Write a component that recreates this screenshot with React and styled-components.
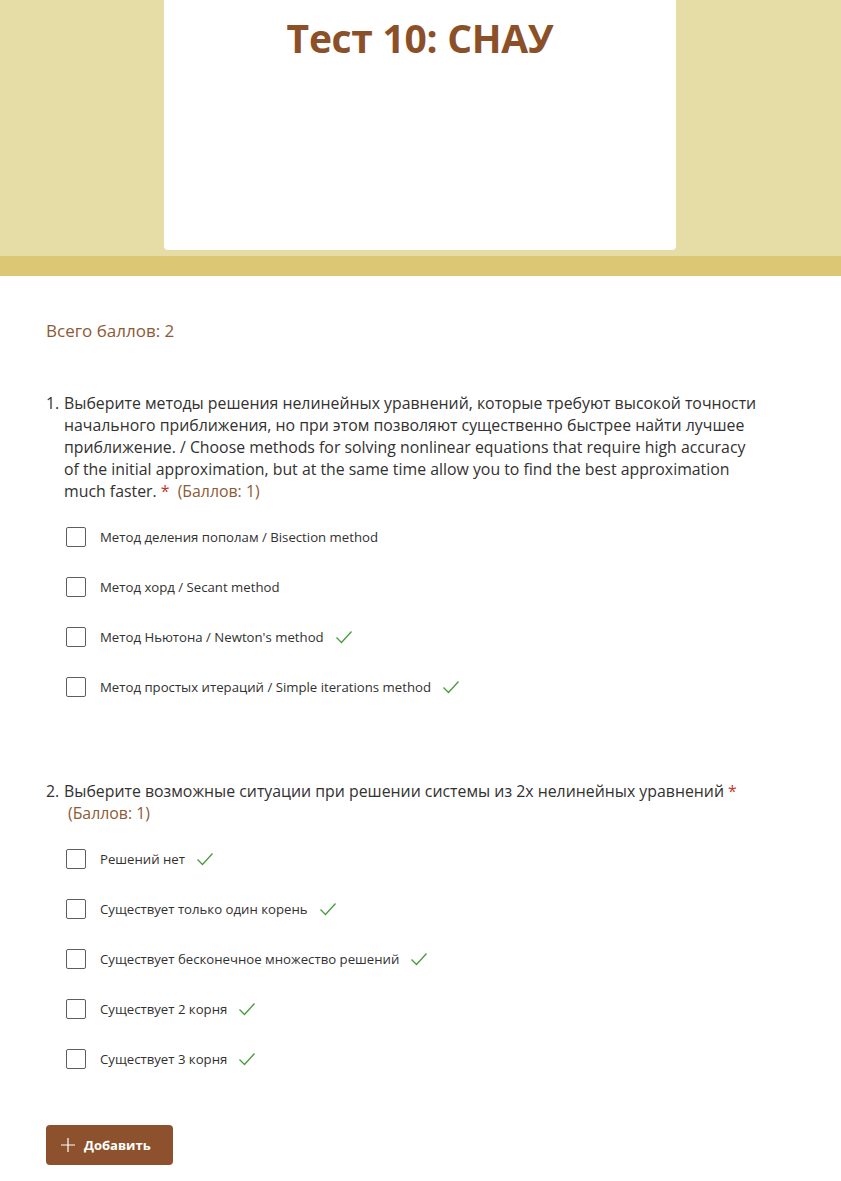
import React from 'react';
import styled, { createGlobalStyle } from 'styled-components';

const GlobalStyle = createGlobalStyle`
  html, body {
    margin: 0;
    padding: 0;
    background: #ffffff;
  }
  body {
    font-family: "Open Sans", "Noto Sans", "Liberation Sans", sans-serif;
    color: #333333;
  }
`;

const Page = styled.div`
  width: 841px;
  min-height: 1181px;
  background: #ffffff;
`;

const Banner = styled.header`
  background: #e6dca5;
  height: 256px;
  display: flex;
  justify-content: center;
`;

const Band = styled.div`
  height: 20px;
  background: #dcc874;
`;

const TitleCard = styled.div`
  width: 512px;
  height: 250px;
  margin-left: -1px;
  background: #ffffff;
  border-radius: 0 0 4px 4px;
  display: flex;
  justify-content: center;
  padding-top: 12px;
  box-sizing: border-box;
`;

const Title = styled.h1`
  margin: 0;
  font-family: "Open Sans", "Noto Sans", sans-serif;
  font-weight: 700;
  font-size: 39px;
  letter-spacing: -0.3px;
  line-height: 52px;
  color: #8c5029;
`;

const Body = styled.main`
  padding: 42px 46px 0 46px;
`;

const Total = styled.div`
  font-size: 17px;
  color: #8d5a35;
  line-height: 26px;
`;

const Question = styled.section`
  margin-top: ${p => p.$top}px;
`;

const QuestionText = styled.div`
  display: flex;
  font-size: 15.85px;
  line-height: 22px;
  color: #323130;
  max-width: 718px;
`;

const Num = styled.span`
  flex: 0 0 18px;
`;

const Star = styled.span`
  color: #c4372b;
`;

const Points = styled.span`
  padding-left: 4px;
  white-space: nowrap;
  color: #8d5a35;
`;

const Options = styled.ul`
  list-style: none;
  margin: 10px 0 0 20px;
  padding: 0;
`;

const Option = styled.li`
  display: flex;
  align-items: center;
  height: 50px;
  font-size: 13.2px;
  color: #323130;
`;

const Box = styled.span`
  width: 18px;
  height: 18px;
  border: 1px solid #605e5c;
  border-radius: 2px;
  margin-right: 14px;
  flex: 0 0 auto;
`;

const Check = styled.svg`
  width: 20px;
  height: 20px;
  margin-left: 10px;
  color: #4a9a3e;
`;

const AddButton = styled.button`
  margin-top: 41px;
  display: inline-flex;
  align-items: center;
  gap: 8px;
  height: 40px;
  padding: 0 22px 0 14px;
  border: none;
  border-radius: 4px;
  background: #8d522d;
  color: #ffffff;
  font-family: "Open Sans", "Noto Sans", sans-serif;
  font-weight: 700;
  font-size: 13px;
  cursor: pointer;
`;

const Tick = () => (
  <Check viewBox="0 0 20 20" fill="none" stroke="currentColor" strokeWidth="1.3">
    <path d="M2.5 10.5 L7.5 15.5 L17.5 4.5" />
  </Check>
);

const q1 = [
  { text: 'Метод деления пополам / Bisection method', ok: false },
  { text: 'Метод хорд / Secant method', ok: false },
  { text: "Метод Ньютона / Newton's method", ok: true },
  { text: 'Метод простых итераций / Simple iterations method', ok: true },
];

const q2 = [
  { text: 'Решений нет', ok: true },
  { text: 'Существует только один корень', ok: true },
  { text: 'Существует бесконечное множество решений', ok: true },
  { text: 'Существует 2 корня', ok: true },
  { text: 'Существует 3 корня', ok: true },
];

function OptionList({ items }) {
  return (
    <Options>
      {items.map(o => (
        <Option key={o.text}>
          <Box />
          {o.text}
          {o.ok && <Tick />}
        </Option>
      ))}
    </Options>
  );
}

export default function App() {
  return (
    <Page>
      <GlobalStyle />
      <Banner>
        <TitleCard>
          <Title>Тест 10: СНАУ</Title>
        </TitleCard>
      </Banner>
      <Band />
      <Body>
        <Total>Всего баллов: 2</Total>
        <Question $top={48}>
          <QuestionText>
            <Num>1.</Num>
            <span>
              Выберите методы решения нелинейных уравнений, которые требуют высокой точности начального приближения, но при этом позволяют существенно быстрее найти лучшее приближение. / Choose methods for solving nonlinear equations that require high accuracy of the initial approximation, but at the same time allow you to find the best approximation much faster.{' '}
              <Star>*</Star> <Points>(Баллов: 1)</Points>
            </span>
          </QuestionText>
          <OptionList items={q1} />
        </Question>
        <Question $top={68}>
          <QuestionText>
            <Num>2.</Num>
            <span>
              Выберите возможные ситуации при решении системы из 2х нелинейных уравнений{' '}
              <Star>*</Star> <Points>(Баллов: 1)</Points>
            </span>
          </QuestionText>
          <OptionList items={q2} />
        </Question>
        <AddButton>
          <svg width="16" height="16" viewBox="0 0 16 16" stroke="#fff" strokeWidth="1.2">
            <path d="M8 1 V15 M1 8 H15" />
          </svg>
          Добавить
        </AddButton>
      </Body>
    </Page>
  );
}
